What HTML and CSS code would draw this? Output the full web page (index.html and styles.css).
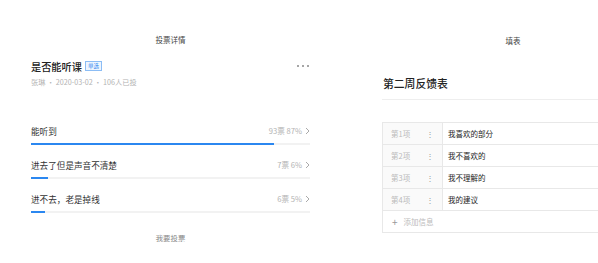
FILE: index.html
```html
<!DOCTYPE html>
<html lang="zh-CN">
<head>
    <meta charset="UTF-8">
    <meta name="viewport" content="width=device-width, initial-scale=1.0">
    <title>投票详情 / 填表</title>
    <link rel="stylesheet" href="styles.css">
</head>
<body>
    <div class="pantalla voto">
        <div class="cabecera">投票详情</div>
        <div class="titulo-fila">
            <div class="titulo">是否能听课 <span class="etiqueta">单选</span></div>
            <div class="mas"><i></i><i></i><i></i></div>
        </div>
        <div class="meta">张琳 · 2020-03-02 · 106人已投</div>

        <div class="opciones">
            <div class="opcion">
                <div class="opcion-fila">
                    <span>能听到</span>
                    <span class="votos">93票 87% <svg width="5" height="8" viewBox="0 0 5 8"><polyline points="1,1 4,4 1,7" fill="none" stroke="#aaa" stroke-width="1"/></svg></span>
                </div>
                <div class="barra"><div class="relleno" style="width: 87%"></div></div>
            </div>
            <div class="opcion">
                <div class="opcion-fila">
                    <span>进去了但是声音不清楚</span>
                    <span class="votos">7票 6% <svg width="5" height="8" viewBox="0 0 5 8"><polyline points="1,1 4,4 1,7" fill="none" stroke="#aaa" stroke-width="1"/></svg></span>
                </div>
                <div class="barra"><div class="relleno" style="width: 6%"></div></div>
            </div>
            <div class="opcion">
                <div class="opcion-fila">
                    <span>进不去，老是掉线</span>
                    <span class="votos">6票 5% <svg width="5" height="8" viewBox="0 0 5 8"><polyline points="1,1 4,4 1,7" fill="none" stroke="#aaa" stroke-width="1"/></svg></span>
                </div>
                <div class="barra"><div class="relleno" style="width: 5%"></div></div>
            </div>
        </div>
        <div class="votar">我要投票</div>
    </div>

    <div class="pantalla formulario">
        <div class="cabecera">填表</div>
        <div class="form-titulo">第二周反馈表</div>
        <div class="tabla">
            <div class="fila">
                <div class="celda-num">第1项 <span class="puntos">⋮</span></div>
                <div class="celda-texto">我喜欢的部分</div>
            </div>
            <div class="fila">
                <div class="celda-num">第2项 <span class="puntos">⋮</span></div>
                <div class="celda-texto">我不喜欢的</div>
            </div>
            <div class="fila">
                <div class="celda-num">第3项 <span class="puntos">⋮</span></div>
                <div class="celda-texto">我不理解的</div>
            </div>
            <div class="fila">
                <div class="celda-num">第4项 <span class="puntos">⋮</span></div>
                <div class="celda-texto">我的建议</div>
            </div>
            <div class="fila-agregar">
                <span class="mas-icono">+</span> 添加信息
            </div>
        </div>
    </div>
</body>
</html>
```

FILE: styles.css
```css
body {
    font-family: "Noto Sans CJK SC", "Noto Sans", sans-serif;
    background-color: #fff;
    color: #333;
    margin: 0;
    display: flex;
    overflow: hidden;
    height: 263px;
}
.pantalla {
    box-sizing: border-box;
    flex: none;
}
.voto {
    width: 340px;
    padding: 34px 30px 0 31px;
}
.formulario {
    width: 346px;
    padding: 35px 0 0 0;
}
.cabecera {
    font-size: 7.5px;
    line-height: 12px;
    text-align: center;
    color: #444;
}
.titulo-fila {
    display: flex;
    justify-content: space-between;
    align-items: center;
    margin-top: 13px;
    height: 14px;
}
.titulo {
    font-size: 10.2px;
    font-weight: 500;
    color: #222;
    display: flex;
    align-items: center;
}
.etiqueta {
    font-size: 5.5px;
    line-height: 8px;
    color: #2b87f0;
    border: 1px solid #8cbdf5;
    background-color: #eef5fe;
    padding: 0 2px;
    margin-left: 3px;
    font-weight: 400;
}
.mas {
    display: flex;
    gap: 3px;
    margin-right: 1px;
}
.mas i {
    width: 2px;
    height: 2px;
    background-color: #888;
    border-radius: 1px;
}
.meta {
    font-size: 7.2px;
    line-height: 10px;
    margin-top: 4px;
    color: #b3b3b3;
}
.opciones {
    margin-top: 38px;
}
.opcion {
    margin-bottom: 14px;
}
.opcion-fila {
    display: flex;
    justify-content: space-between;
    align-items: center;
    font-size: 8.6px;
    line-height: 12px;
    color: #333;
}
.votos {
    font-size: 7.6px;
    color: #b3b3b3;
    display: flex;
    align-items: center;
    gap: 3px;
}
.barra {
    margin-top: 6px;
    height: 2px;
    background-color: #f2f2f2;
}
.relleno {
    height: 2px;
    background-color: #2b87f0;
}
.votar {
    margin-top: 20px;
    font-size: 7.4px;
    line-height: 10px;
    text-align: center;
    color: #888;
}
.form-titulo {
    margin: 28px 0 0 42px;
    font-size: 10.8px;
    line-height: 16px;
    font-weight: 500;
    color: #222;
    padding: 0 0 8px 1px;
    border-bottom: 1px solid #eee;
}
.tabla {
    margin: 22px 0 0 42px;
    width: 300px;
    border: 1px solid #e8e8e8;
    font-size: 7.5px;
}
.fila {
    display: flex;
    height: 21px;
    border-bottom: 1px solid #e8e8e8;
}
.celda-num {
    width: 60px;
    box-sizing: border-box;
    padding: 0 8px 0 8px;
    display: flex;
    justify-content: space-between;
    align-items: center;
    color: #bbb;
    background-color: #fafafa;
    border-right: 1px solid #e8e8e8;
}
.puntos {
    color: #999;
    font-size: 8px;
}
.celda-texto {
    display: flex;
    align-items: center;
    padding-left: 5px;
    color: #222;
}
.fila-agregar {
    height: 21px;
    display: flex;
    align-items: center;
    padding-left: 9px;
    color: #bbb;
}
.mas-icono {
    font-size: 10px;
    color: #999;
    margin-right: 6px;
}
```
